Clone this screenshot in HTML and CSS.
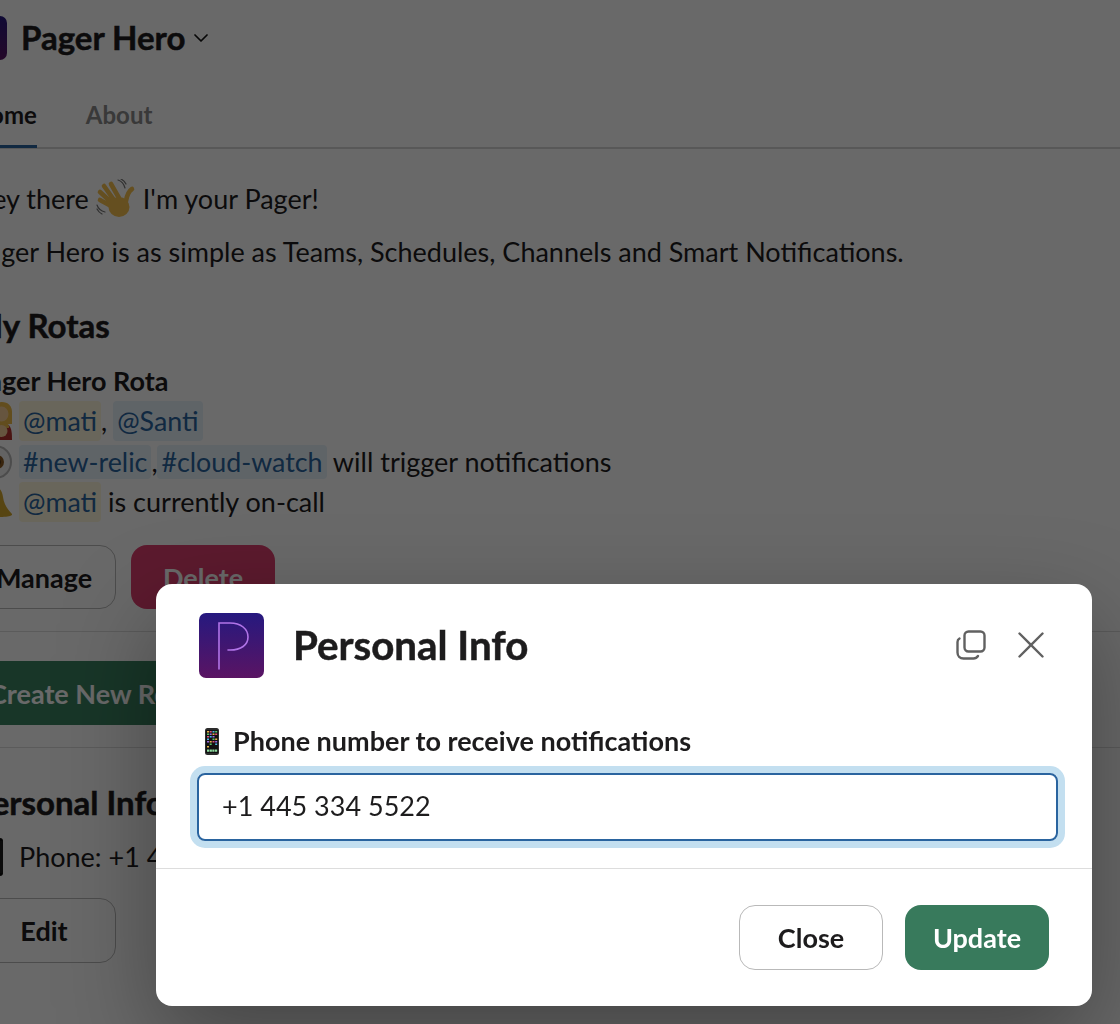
FILE: index.html
```html
<!DOCTYPE html>
<html lang="en">
<head>
<meta charset="utf-8">
<title>Pager Hero</title>
<link rel="stylesheet" href="styles.css">
</head>
<body>
<main class="page">
  <header class="app-head">
    <svg class="app-logo" viewBox="0 0 44 44"><defs><linearGradient id="lg1" x1="0" y1="0" x2="0" y2="1"><stop offset="0" stop-color="#26197f"/><stop offset="1" stop-color="#5a1463"/></linearGradient></defs><rect width="44" height="44" rx="7" fill="url(#lg1)"/></svg>
    <h1 class="app-title">Pager Hero</h1>
    <svg class="chev" viewBox="0 0 14 8"><path d="M1 1l6 6 6-6" fill="none" stroke="#111" stroke-width="1.700" stroke-linecap="round" stroke-linejoin="round"/></svg>
  </header>
  <nav class="tabs">
    <span class="tab tab-on">Home</span>
    <span class="tab">About</span>
  </nav>
  <section class="body">
    <p class="line hello">Hey there
      <svg class="wave" viewBox="0 0 40 40"><g fill="none" stroke="#f4c04e" stroke-linecap="round"><path d="M15 5l8 14M8 7l10 14M4 13l11 10M4 21l11 6" stroke-width="4.600"/><path d="M36 10c-3 2-5 6-6 12" stroke-width="4.600"/></g><ellipse cx="23" cy="28" rx="10.500" ry="10" fill="#f4c04e"/><g fill="none" stroke="#777" stroke-width="1.200" stroke-linecap="round"><path d="M22 1c3 1 6 4 7 8M25 0c2 1 4 3 5 5M1 26c1 3 4 6 8 7M1 30c1 2 3 4 5 5"/></g></svg>
      I'm your Pager!</p>
    <p class="line intro">Pager Hero is as simple as Teams, Schedules, Channels and Smart Notifications.</p>
    <h2 class="h-sec rotas">My Rotas</h2>
    <p class="line rota-name">Pager Hero Rota</p>
    <p class="line row r1"><svg class="emo" viewBox="0 0 40 38"><path d="M30 0c-7 0-12 5-12 12v10h22v-12c0-6-4-10-10-10z" fill="#eebc4a"/><ellipse cx="29.500" cy="12" rx="7" ry="7.500" fill="#f8cf9a"/><path d="M16 38c0-10 5-17 14-17s10 6 10 17z" fill="#b5322e"/><path d="M22 24c1-3 5-4 8-4s6 1 7 4v2H22z" fill="#eebc4a"/><circle cx="29.500" cy="29" r="6" fill="#f8cf9a"/></svg><span class="chip chip-me">@mati</span>, <span class="chip chip-user">@Santi</span></p>
    <p class="line row r2"><svg class="emo" viewBox="0 0 40 34"><ellipse cx="25" cy="17" rx="14" ry="15.500" fill="#f1f1f1" stroke="#b9b9b9" stroke-width="2"/><circle cx="25" cy="17" r="7" fill="#8a5a22"/><circle cx="25" cy="17" r="3.500" fill="#111"/></svg><span class="chip chip-chan">#new-relic</span><span class="comma">,</span><span class="chip chip-chan">#cloud-watch</span> will trigger notifications</p>
    <p class="line row r3"><svg class="emo" viewBox="0 0 40 34"><path d="M22 2c6 0 8 4 9 10 1 7 4 12 9 17v1c-3 2-7 2-18 2s-15 0-18-2c5-5 8-10 9-17 1-6 3-10 9-10z" fill="#d4a72c"/></svg><span class="chip chip-me">@mati</span> is currently on-call</p>
    <div class="actions act1"><span class="btn btn-plain btn-wide">Manage</span><span class="btn btn-danger">Delete</span></div>
    <hr class="rule rule1">
    <div class="actions act2"><span class="btn btn-primary btn-new">Create New Rota</span></div>
    <hr class="rule rule2">
    <h2 class="h-sec pinfo">Personal Info</h2>
    <p class="line row r4"><svg class="emo phone" viewBox="0 0 31 40"><rect x="11" y="1" width="20" height="38" rx="3" fill="#0d0d0d"/><rect x="14" y="4" width="17" height="32" fill="#1c1c1c"/></svg>Phone: +1 445 334 5522</p>
    <div class="actions act3"><span class="btn btn-plain btn-wide btn-edit">Edit</span></div>
  </section>
</main>
<div class="scrim"></div>
<div class="modal" role="dialog">
  <div class="modal-head">
    <svg class="modal-logo" viewBox="0 0 65 65"><defs><linearGradient id="lg2" x1="0" y1="0" x2="0" y2="1"><stop offset="0" stop-color="#26197f"/><stop offset="1" stop-color="#5a1463"/></linearGradient></defs><rect width="65" height="65" rx="7" fill="url(#lg2)"/><path d="M20 56V10h11c11 0 18 6 18 14s-7 13-18 13h-2" fill="none" stroke="#b174e8" stroke-width="1.600" stroke-linecap="round"/></svg>
    <h2 class="modal-title">Personal Info</h2>
    <svg class="mi mi-copy" viewBox="0 0 30 30"><rect x="8.500" y="1.500" width="20" height="20" rx="4" fill="none" stroke="#616161" stroke-width="2.400"/><path d="M3.500 8.500c-1.500 .8-2 2-2 3.500v10.500c0 3.500 2.500 6 6 6h10c2 0 3.500-1 4.500-2.500" fill="none" stroke="#616161" stroke-width="2.400" stroke-linecap="round"/></svg>
    <svg class="mi mi-x" viewBox="0 0 26 26"><path d="M1.500 1.500l23 23M24.500 1.500l-23 23" fill="none" stroke="#616161" stroke-width="2.400" stroke-linecap="round"/></svg>
  </div>
  <div class="modal-body">
    <label class="field-label"><svg class="phone-ico" viewBox="0 0 14 27"><rect width="14" height="27" rx="2.500" fill="#2b2b2b"/><rect x="1" y="2" width="12" height="23" fill="#111"/><path d="M2 3h2v1.600H2zM7.500 5.500h2v1.600h-2zM10.200 10.500h2v1.600h-2zM4.700 13h2v1.600h-2zM2 18h2v1.600H2z" fill="#e9b44c"/><path d="M4.700 3h2v1.600h-2zM2 8h2v1.600H2zM10.200 5.500h2v1.600h-2zM7.500 13h2v1.600h-2z" fill="#e0517a"/><path d="M7.500 3h2v1.600h-2zM4.700 8h2v1.600h-2zM2 10.500h2v1.600H2zM10.200 15.500h2v1.600h-2z" fill="#4bb8e8"/><path d="M10.200 3h2v1.600h-2zM2 5.500h2v1.600H2zM7.500 10.500h2v1.600h-2zM4.700 15.500h2v1.600h-2z" fill="#5fc46a"/><path d="M4.700 5.500h2v1.600h-2zM7.500 8h2v1.600h-2zM10.200 13h2v1.600h-2zM2 13h2v1.600H2z" fill="#9a6ae0"/><path d="M2 21.500h2.200v2.200H2zM4.700 21.500h2.200v2.200H4.700zM7.300 21.500h2.200v2.200H7.300zM10 21.500h2.200v2.200H10z" fill="#8fdca0"/></svg>Phone number to receive notifications</label>
    <div class="field">+1 445 334 5522</div>
  </div>
  <div class="modal-foot">
    <span class="btn btn-plain btn-close">Close</span>
    <span class="btn btn-primary btn-update">Update</span>
  </div>
</div>
</body>
</html>
```
FILE: styles.css
```css
* { box-sizing: border-box; }
html, body { margin: 0; height: 100%; }
body { background: #fff; color: #1d1c1d; font-family: Lato, "Liberation Sans", sans-serif; overflow: hidden; }
.page { height: 1024px; margin-left: -28px; overflow: hidden; }
p, h1, h2 { margin: 0; }
hr { border: 0; }

.app-head { display: flex; align-items: center; height: 76px; }
.app-logo { width: 44px; height: 44px; margin-left: -9px; margin-right: 14px; }
.app-title { font-size: 33px; line-height: 40px; font-weight: 700; -webkit-text-stroke: .5px currentColor; margin-top: -2px; }
.chev { width: 14px; height: 8px; margin-left: 9px; }

.tabs { display: flex; gap: 49px; height: 73px; border-bottom: 2px solid #d6d6d6; }
.tab { font-size: 24px; font-weight: 700; line-height: 30px; padding-top: 24px; color: #8a8a8a; }
.tab-on { color: #1d1c1d; border-bottom: 3px solid #2a649f; height: 72px; }

.line { font-size: 27px; line-height: 40px; }
.hello { margin-top: 30px; display: flex; align-items: center; gap: 7px; height: 40px; }
.wave { width: 40px; height: 40px; }
.intro { margin-top: 13px; white-space: nowrap; }
.h-sec { font-size: 33px; line-height: 40px; font-weight: 700; -webkit-text-stroke: .5px currentColor; }
.rotas { margin-top: 33px; }
.rota-name { font-weight: 700; margin-top: 16px; }
.row { display: flex; align-items: center; white-space: pre; }
.emo { width: 40px; height: 34px; margin-right: 7px; flex: none; }
.r1 { height: 40px; }
.r1 .emo { height: 38px; }
.r2 { margin-top: 1px; height: 40px; }
.r3 { height: 40px; }
.r4 { margin-top: 15px; height: 40px; }
.chip { display: inline-block; padding: 0 4px; border-radius: 4px; color: #2a649f; height: 40px; line-height: 40px; font-size: 26.8px; }
.chip-me { background: #fff8dc; }
.chip-user { background: #e6f2fa; margin-left: -1px; }
.chip-chan { background: #e6f2fa; height: 34px; line-height: 34px; }
.comma { width: 6px; }
.phone { width: 31px; height: 40px; margin-right: 16px; }

.actions { display: flex; gap: 15px; }
.act1 { margin-top: 23px; }
.act2 { margin-top: 29px; }
.act3 { margin-top: 21px; }
.btn { display: inline-flex; align-items: center; justify-content: center; height: 64px; border-radius: 16px; font-size: 27px; font-weight: 700; border: 1px solid transparent; }
.btn-plain { background: #fff; border-color: #b9b9b9; color: #1d1c1d; }
.btn-wide { width: 144px; }
.btn-edit { height: 65px; }
.btn-danger { width: 144px; background: #e04070; color: #fff; }
.btn-primary { background: #3c8463; color: #fff; }
.btn-new { width: 300px; justify-content: flex-start; padding-left: 16px; }
.rule { height: 1px; background: #dcdcdc; width: 1148px; margin: 0; }
.rule1 { margin-top: 22px; }
.rule2 { margin-top: 22px; }
.pinfo { margin-top: 34px; }

.scrim { position: fixed; inset: 0; background: rgba(0, 0, 0, .59); }
.modal { position: absolute; left: 156px; top: 584px; width: 936px; height: 422px; background: #fff; border-radius: 16px; box-shadow: 0 36px 96px rgba(0, 0, 0, .35); color: #1d1c1d; display: flex; flex-direction: column; }
.modal-head { display: flex; align-items: center; padding: 29px 48px 0 43px; height: 94px; }
.modal-logo { width: 65px; height: 65px; flex: none; }
.modal-title { font-size: 40.3px; font-weight: 700; line-height: 44px; margin-left: 29px; margin-top: -2px; flex: 1; -webkit-text-stroke: .5px currentColor; }
.mi { flex: none; }
.mi-copy { width: 30px; height: 30px; margin-right: 32px; margin-top: -2px; }
.mi-x { width: 26px; height: 26px; margin-top: -2px; }
.modal-body { padding: 0 34px 0 41px; height: 191px; border-bottom: 1px solid #dddddd; }
.field-label { display: flex; align-items: center; font-size: 27px; font-weight: 700; line-height: 36px; margin-top: 45px; margin-left: 8px; }
.phone-ico { width: 14px; height: 27px; margin-right: 14px; }
.field { margin-top: 14px; height: 68px; width: 861px; border: 2px solid #2a649f; border-radius: 8px; box-shadow: 0 0 0 7px #c3dff0; padding: 0 23px; font-size: 27px; line-height: 62px; color: #1d1c1d; }
.modal-foot { display: flex; justify-content: flex-end; gap: 22px; padding: 36px 43px 0 0; }
.btn-close { width: 144px; height: 65px; }
.btn-update { width: 144px; height: 65px; background: #387a5c; }
```
